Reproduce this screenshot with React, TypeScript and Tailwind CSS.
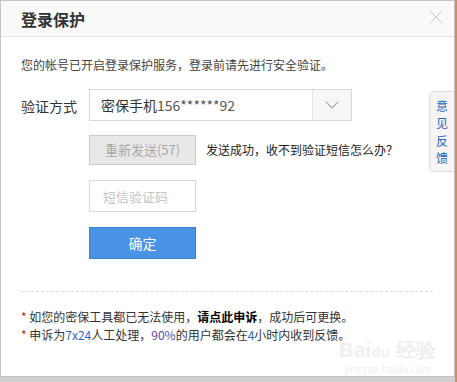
import { X, ChevronDown } from "lucide-react";

const font = { fontFamily: '"Microsoft YaHei", "Noto Sans CJK SC", "Liberation Sans", sans-serif' };

export default function App() {
  return (
    <div className="relative flex w-[457px] h-[382px] bg-[#cfcfcf] overflow-hidden" style={font}>
      <div className="relative flex flex-col w-[455px] h-[377px] bg-white border border-[#c4c4c4] text-[#333]">
        {/* header */}
        <div className="flex items-center justify-between h-[36px] shrink-0 bg-[#fafafa] border-b border-[#e6e6e6] pl-[20px] pr-[6px]">
          <h1 className="text-[16px] font-bold text-[#333] leading-none">登录保护</h1>
          <X className="w-[24px] h-[24px] text-[#c8c8c8] -mt-[4px]" strokeWidth={1} />
        </div>

        <div className="flex flex-col pl-[20px] pr-[20px]">
          <p className="mt-[19px] text-[12px] leading-[18px] text-[#444]">
            您的帐号已开启登录保护服务，登录前请先进行安全验证。
          </p>

          <div className="flex items-center mt-[15px]">
            <span className="w-[68px] text-[14px] text-[#333] mt-[2px]">验证方式</span>
            <div className="flex h-[32px] w-[263px] border border-[#d9d9d9] bg-white">
              <div className="flex flex-1 items-center pl-[11px] text-[14px] text-[#333]">
                密保手机<span className="text-[#555]">156******92</span>
              </div>
              <div className="flex w-[39px] items-center justify-center border-l border-[#e4e4e4] bg-[#f7f7f7]">
                <ChevronDown className="w-[24px] h-[24px] text-[#aaa]" strokeWidth={1.1} />
              </div>
            </div>
          </div>

          <div className="flex items-center mt-[14px] ml-[68px]">
            <button className="h-[30px] w-[107px] bg-[#e8e8e8] border border-[#cccccc] text-[13px] text-[#a8a8a8]">
              重新发送(57)
            </button>
            <span className="ml-[10px] text-[12px] text-[#222]">发送成功，收不到验证短信怎么办？</span>
          </div>

          <div className="flex mt-[15px] ml-[68px]">
            <input
              className="h-[32px] w-[107px] border border-[#d9d9d9] pl-[13px] text-[13px] outline-none placeholder:text-[#c4c4c4]"
              placeholder="短信验证码"
            />
          </div>

          <div className="flex mt-[15px] ml-[68px]">
            <button className="h-[32px] w-[107px] bg-[#4a92e4] border border-[#3d82d0] text-[14px] text-white">
              确定
            </button>
          </div>

          <div className="mt-[32px] border-t border-dashed border-[#dcdcdc] mr-[1px]" />

          <div className="mt-[16px] text-[12px] leading-[18px] text-[#333]">
            <p>
              <span className="text-[#b22]">*</span> 如您的密保工具都已无法使用，
              <span className="text-black font-bold">请点此申诉</span>，成功后可更换。
            </p>
            <p>
              <span className="text-[#b22]">*</span> 申诉为<span className="text-[#3366cc]">7x24</span>人工处理，
              <span className="text-[#5a4aa8]">90%</span>的用户都会在<span className="text-[#3366cc]">4</span>
              小时内收到反馈。
            </p>
          </div>
        </div>

        {/* feedback tab */}
        <div className="absolute right-0 top-[90px] flex w-[25px] h-[81px] flex-col items-center justify-center rounded-l-[5px] border border-r-0 border-[#dcdcdc] bg-[#f5f5f5] text-[12px] leading-[17.5px] text-[#2a62b8]">
          <span>意</span>
          <span>见</span>
          <span>反</span>
          <span>馈</span>
        </div>

        {/* watermark */}
        <div className="absolute left-[338px] top-[338px] flex flex-col items-center text-[#efefef] pointer-events-none">
          <span className="text-[20px] font-bold leading-[22px] tracking-wide" style={{ fontFamily: '"Liberation Sans", sans-serif' }}>
            Bai<span className="text-[14px]">du</span> 经验
          </span>
          <span className="text-[10px] leading-[12px]">jingyan.baidu.com</span>
        </div>
      </div>
      <div className="w-[2px] h-full bg-[#d98a5c]" />
    </div>
  );
}
